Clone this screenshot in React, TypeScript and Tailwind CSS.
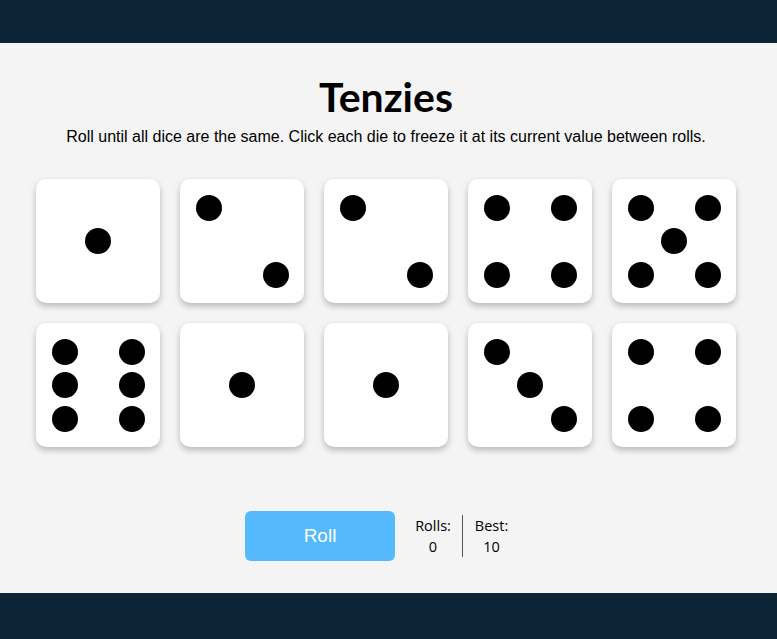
import React from "react";

const dice = [1, 2, 2, 4, 5, 6, 1, 1, 3, 4];

// pip cells as [row, col] in a 3x3 grid
const pipMap: Record<number, [number, number][]> = {
  1: [[1, 1]],
  2: [[0, 0], [2, 2]],
  3: [[0, 0], [1, 1], [2, 2]],
  4: [[0, 0], [0, 2], [2, 0], [2, 2]],
  5: [[0, 0], [0, 2], [1, 1], [2, 0], [2, 2]],
  6: [[0, 0], [0, 2], [1, 0], [1, 2], [2, 0], [2, 2]],
};

const rowClass = ["row-start-1", "row-start-2", "row-start-3"];
const colClass = ["col-start-1", "col-start-2", "col-start-3"];

function Die({ value }: { value: number }) {
  return (
    <button
      type="button"
      className="flex h-[124px] w-[124px] items-center justify-center rounded-[10px] bg-white shadow-[0_3px_6px_rgba(0,0,0,0.25)]"
    >
      <div className="grid grid-cols-[26px_26px_26px] grid-rows-[26px_26px_26px] gap-[7.5px]">
        {pipMap[value].map(([r, c], i) => (
          <span
            key={i}
            className={`${rowClass[r]} ${colClass[c]} block h-[26px] w-[26px] rounded-full bg-black`}
          />
        ))}
      </div>
    </button>
  );
}

export default function App() {
  return (
    <div className="flex h-[639px] w-full flex-col bg-[#f4f4f4]">
      <header className="h-[43px] shrink-0 bg-[#0b2334]" />
      <main className="flex h-[550px] shrink-0 flex-col items-center pr-[5px] pt-[30px]">
        <h1 className="font-['Lato',sans-serif] text-[41px] font-bold leading-[48px] text-black">
          Tenzies
        </h1>
        <p className="mt-[6px] font-['Liberation_Sans',Arial,sans-serif] text-[16px] leading-[20px] text-black">
          Roll until all dice are the same. Click each die to freeze it at its current value between rolls.
        </p>
        <div className="mt-[32px] grid grid-cols-[repeat(5,124px)] gap-[20px]">
          {dice.map((v, i) => (
            <Die key={i} value={v} />
          ))}
        </div>
        <div className="mt-[64px] flex items-center pr-[7px]">
          <button
            type="button"
            className="h-[50px] w-[150px] rounded-[6px] bg-[#55b9fd] font-['Liberation_Sans',Arial,sans-serif] text-[19px] text-white"
          >
            Roll
          </button>
          <div className="ml-[9px] flex font-['Open_Sans',sans-serif] text-[14.5px] leading-[21px] text-black">
            <div className="w-[58px] text-center">
              <div>Rolls:</div>
              <div>0</div>
            </div>
            <div className="w-[58px] border-l border-[#555] text-center">
              <div>Best:</div>
              <div>10</div>
            </div>
          </div>
        </div>
      </main>
      <footer className="h-[46px] shrink-0 bg-[#0b2334]" />
    </div>
  );
}
